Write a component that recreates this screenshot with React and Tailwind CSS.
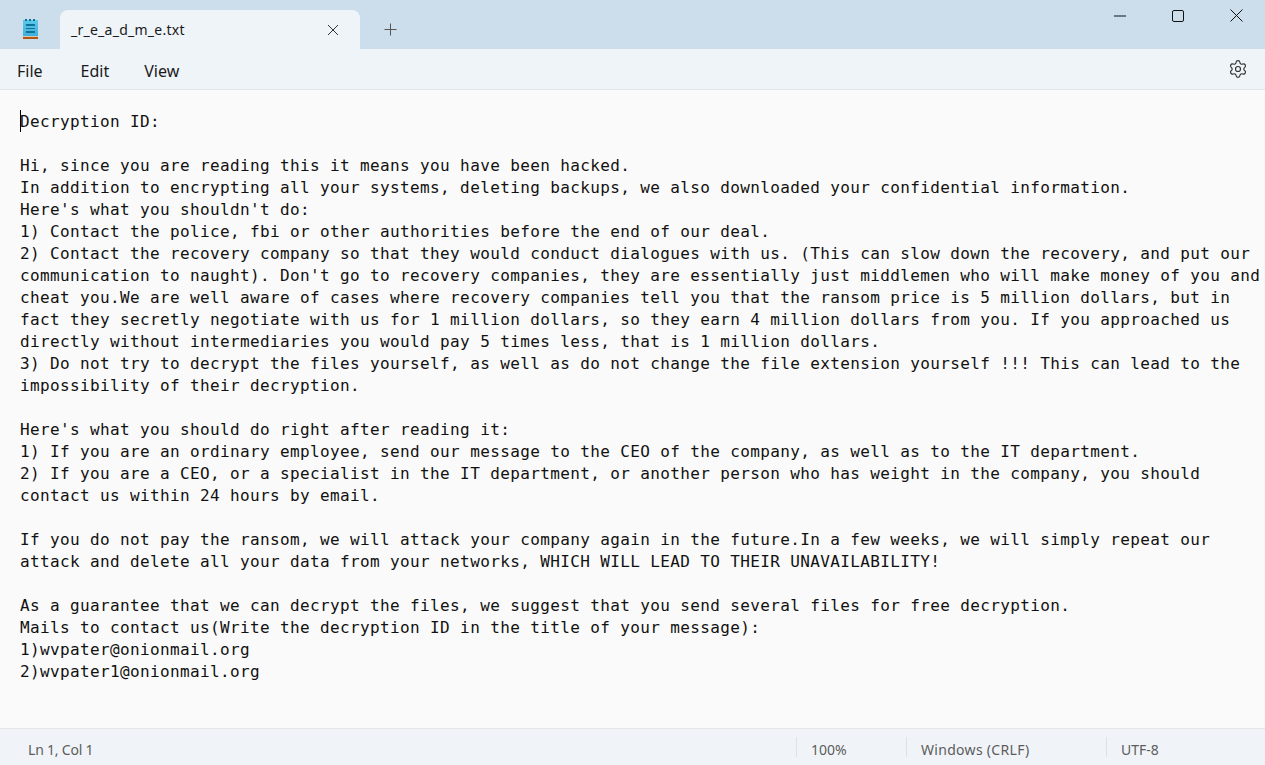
import React from 'react';
import { Settings } from 'lucide-react';

const lines = [
  'Decryption ID:',
  '',
  'Hi, since you are reading this it means you have been hacked.',
  'In addition to encrypting all your systems, deleting backups, we also downloaded your confidential information.',
  "Here's what you shouldn't do:",
  '1) Contact the police, fbi or other authorities before the end of our deal.',
  '2) Contact the recovery company so that they would conduct dialogues with us. (This can slow down the recovery, and put our',
  "communication to naught). Don't go to recovery companies, they are essentially just middlemen who will make money of you and",
  'cheat you.We are well aware of cases where recovery companies tell you that the ransom price is 5 million dollars, but in',
  'fact they secretly negotiate with us for 1 million dollars, so they earn 4 million dollars from you. If you approached us',
  'directly without intermediaries you would pay 5 times less, that is 1 million dollars.',
  '3) Do not try to decrypt the files yourself, as well as do not change the file extension yourself !!! This can lead to the',
  'impossibility of their decryption.',
  '',
  "Here's what you should do right after reading it:",
  '1) If you are an ordinary employee, send our message to the CEO of the company, as well as to the IT department.',
  '2) If you are a CEO, or a specialist in the IT department, or another person who has weight in the company, you should',
  'contact us within 24 hours by email.',
  '',
  'If you do not pay the ransom, we will attack your company again in the future.In a few weeks, we will simply repeat our',
  'attack and delete all your data from your networks, WHICH WILL LEAD TO THEIR UNAVAILABILITY!',
  '',
  'As a guarantee that we can decrypt the files, we suggest that you send several files for free decryption.',
  'Mails to contact us(Write the decryption ID in the title of your message):',
  '1)wvpater@onionmail.org',
  '2)wvpater1@onionmail.org',
];

const NotepadIcon = () => (
  <svg width="15" height="20" viewBox="0 0 15 20">
    <defs>
      <linearGradient id="pad" x1="0" y1="0" x2="0" y2="1">
        <stop offset="0" stopColor="#5cc9ea" />
        <stop offset="1" stopColor="#3fb0dc" />
      </linearGradient>
    </defs>
    <rect x="0" y="1" width="15" height="16" fill="url(#pad)" />
    <rect x="2" y="0" width="2" height="2" fill="#0f6f94" />
    <rect x="6" y="0" width="2" height="2" fill="#0f6f94" />
    <rect x="10" y="0" width="2" height="2" fill="#0f6f94" />
    <rect x="3" y="5" width="9" height="2" fill="#0f7397" />
    <rect x="3" y="9" width="9" height="1" fill="#0f7397" />
    <rect x="3" y="12" width="9" height="2" fill="#0f7397" />
    <rect x="0" y="17" width="15" height="1" fill="#d9c9b8" />
    <rect x="0" y="18" width="15" height="2" fill="#b4560f" />
  </svg>
);

export default function App() {
  return (
    <div className="h-[765px] w-[1265px] flex flex-col overflow-hidden bg-[#fafafa] font-['Noto_Sans',sans-serif]">
      {/* Title bar with tab */}
      <div className="h-[49px] flex items-end bg-[#ccdeeb] shrink-0">
        <div className="w-[60px] h-full flex items-start justify-center pt-[19px]">
          <NotepadIcon />
        </div>
        <div className="w-[300px] h-[39px] bg-[#eff4f9] rounded-t-[8px] flex items-center justify-between pl-[11px] pr-[21px]">
          <span className="text-[14px] text-[#1a1a1a] tracking-[0.25px]">_r_e_a_d_m_e.txt</span>
          <svg width="12" height="12" viewBox="0 0 12 12" stroke="#333" strokeWidth="1" fill="none">
            <path d="M1 1l10 10M11 1L1 11" />
          </svg>
        </div>
        <div className="w-[60px] h-[39px] flex items-center justify-center">
          <svg width="13" height="13" viewBox="0 0 13 13" stroke="#555" strokeWidth="1" fill="none">
            <path d="M6.5 0.5v12M0.5 6.5h12" />
          </svg>
        </div>
        <div className="flex-1 h-full flex items-start justify-end">
          <div className="h-[31px] flex items-center gap-[46px] pr-[22px]">
            <svg width="12" height="2" viewBox="0 0 12 2" stroke="#111" strokeWidth="1"><path d="M0 1h12" /></svg>
            <svg width="12" height="12" viewBox="0 0 12 12" stroke="#111" strokeWidth="1" fill="none"><rect x="0.5" y="0.5" width="11" height="11" rx="1.5" /></svg>
            <svg width="13" height="13" viewBox="0 0 13 13" stroke="#111" strokeWidth="1" fill="none"><path d="M0.5 0.5l12 12M12.5 0.5l-12 12" /></svg>
          </div>
        </div>
      </div>

      {/* Menu bar */}
      <div className="h-[41px] flex items-center justify-between bg-[#eff4f9] border-b border-[#e5e5e5] shrink-0 pl-[17px] pr-[17px]">
        <div className="flex items-center gap-[37px] pt-[3px] text-[16px] text-[#1a1a1a]">
          <span>File</span>
          <span className="ml-[1px]">Edit</span>
          <span className="-ml-[2px]">View</span>
        </div>
        <Settings size={20} strokeWidth={1.4} className="text-[#333]" />
      </div>

      {/* Editor */}
      <div className="relative flex-1 pt-[21px] pl-[20px] font-['DejaVu_Sans_Mono',monospace] text-[16px] leading-[22px] tracking-[0.37px] text-[#111]">
        <div className="absolute left-[20px] top-[20px] w-[1px] h-[22px] bg-black" />
        {lines.map((line, i) => (
          <div key={i} className="h-[22px] whitespace-pre">{line}</div>
        ))}
      </div>

      {/* Status bar */}
      <div className="h-[37px] flex items-center bg-[#f0f4f9] border-t border-[#e5e5e5] shrink-0 text-[14px] text-[#5c5c5c]">
        <div className="w-[796px] pl-[28px] pt-[4px] tracking-[-0.2px]">Ln 1, Col 1</div>
        <div className="w-[110px] h-[20px] flex items-center pl-[14px] pt-[4px] border-l border-[#e1e1e1]">100%</div>
        <div className="w-[200px] h-[20px] flex items-center pl-[14px] pt-[4px] border-l border-[#e1e1e1] tracking-[0.3px]">Windows (CRLF)</div>
        <div className="h-[20px] flex items-center pl-[14px] pt-[4px] border-l border-[#e1e1e1]">UTF-8</div>
      </div>
    </div>
  );
}
